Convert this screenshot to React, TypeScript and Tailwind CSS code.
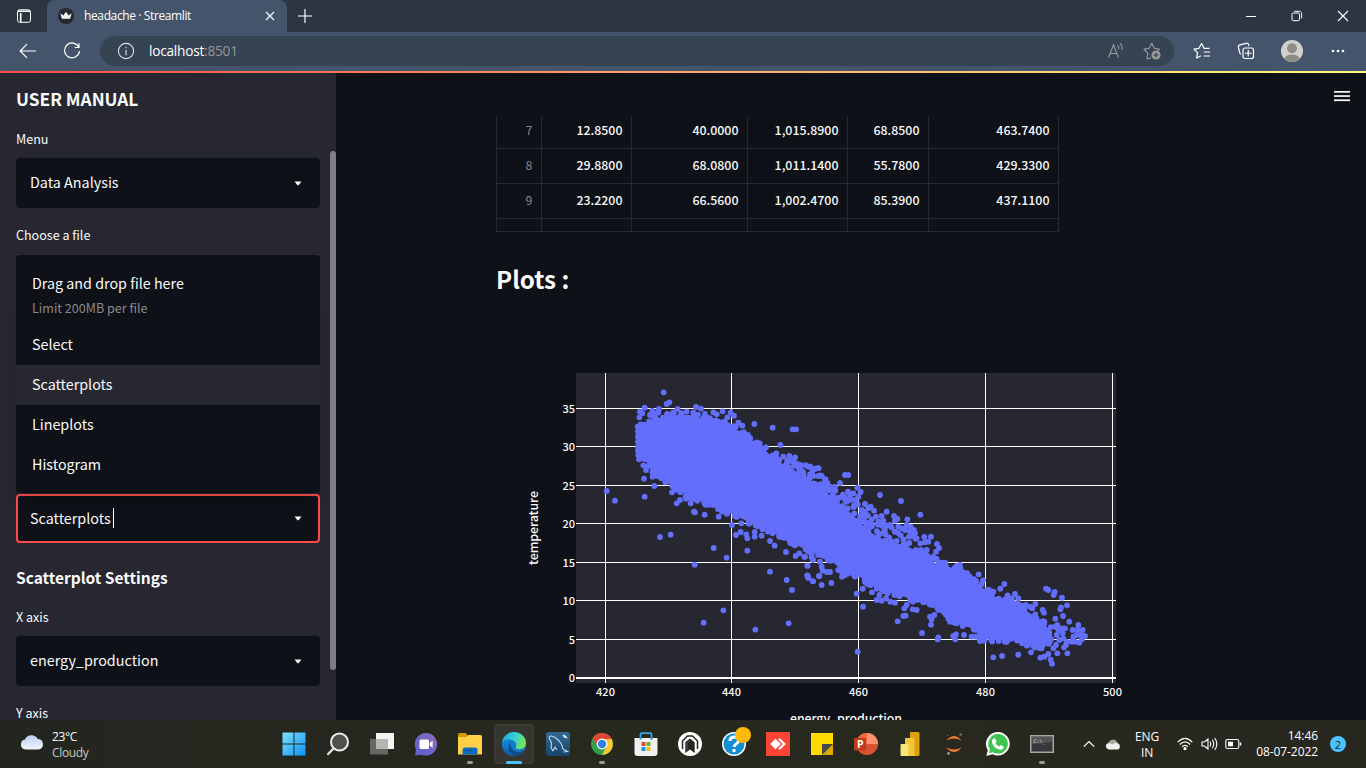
import React from "react";

type Pt = [number, number];

const SANS = "font-['Noto_Sans_CJK_SC','Noto_Sans',sans-serif]";
const UI = "font-['Open_Sans','Noto_Sans',sans-serif]";

/* ---------- scatter data ---------- */
const UPPER: Pt[] = [
  [639, 427], [644, 426], [650, 422], [660, 418], [677, 415], [690, 415], [697, 417], [710, 421], [723, 424], [733, 427], [740, 432], [750, 441],
  [767, 452], [777, 461], [793, 469], [803, 477], [820, 485], [833, 499], [845, 508], [857, 519], [865, 529], [877, 536],
  [890, 542], [905, 545], [920, 553], [937, 564], [957, 569], [973, 581], [987, 593], [1000, 599], [1017, 605], [1033, 615],
  [1043, 624], [1052, 631],
];
const LOWER: Pt[] = [
  [1052, 640], [1044, 648], [1036, 647], [1024, 643], [1013, 640], [993, 640], [980, 638], [971, 624], [950, 620],
  [943, 611], [930, 604], [913, 600], [897, 594], [877, 589], [860, 577], [843, 572], [835, 564], [821, 555],
  [800, 547], [787, 540], [773, 533], [757, 525], [740, 518], [723, 510], [707, 504], [690, 497], [677, 489],
  [660, 478], [649, 467], [642, 455], [639, 445],
];

const LEFT_POINTS: Pt[] = [
  [461, 97], [470, 132], [478, 127], [404, 143], [390, 155], [397, 160], [388, 172], [447, 147], [427, 152], [432, 160], [445, 158], [420, 165],
  [503, 147], [490, 157], [515, 160], [558, 141], [573, 146], [550, 158], [585, 162], [610, 157], [620, 163], [638, 154], [662, 158], [672, 167],
  [652, 172], [600, 175], [625, 185], [645, 187], [685, 188], [697, 197], [733, 192], [788, 203], [848, 208], [858, 208], [811, 255],
  [714, 225], [720, 235], [749, 250], [768, 262], [799, 280], [800, 295], [820, 290], [838, 288], [855, 292], [832, 302],
  [845, 303], [862, 312], [865, 322], [820, 322], [895, 320], [909, 328], [925, 348], [900, 343], [880, 338], [402, 356], [404, 410],
  [290, 393], [315, 422], [433, 378], [500, 430], [486, 397], [510, 420], [528, 416], [542, 430], [555, 457], [552, 455],
  [584, 464], [626, 470], [450, 531], [482, 524], [554, 614], [611, 564], [650, 593], [712, 572], [678, 525], [692, 516],
  [709, 523], [712, 535], [666, 495], [694, 490], [734, 516], [734, 530], [755, 527], [780, 543], [794, 557], [828, 576],
  [780, 635], [830, 660], [846, 690], [893, 617], [892, 646], [895, 653], [909, 664], [927, 648], [640, 751], [581, 788],
  [736, 809], [836, 790], [857, 588], [868, 580], [883, 590], [905, 592], [909, 600], [387, 298], [400, 316], [408, 330], [428, 350],
  [383, 200], [384, 215], [384, 230], [384, 245], [384, 260], [384, 273], [385, 285], [392, 193],
];
const RIGHT_POINTS: Pt[] = [
  [28, 320], [38, 328], [0, 323], [135, 345], [145, 345], [120, 369], [65, 348], [10, 342], [40, 348], [75, 360], [90, 380], [98, 388],
  [105, 413], [118, 413], [132, 410], [172, 383], [182, 396], [144, 395], [150, 405], [160, 400], [175, 410], [168, 420], [140, 425],
  [240, 405], [303, 423], [361, 464], [260, 455], [212, 440], [222, 452], [195, 432], [205, 445], [185, 450], [190, 462], [245, 468],
  [228, 470], [235, 485], [215, 478], [250, 482], [205, 490], [282, 468], [292, 477], [285, 482], [295, 500], [270, 495], [255, 500],
  [322, 478], [320, 495], [332, 500], [342, 510], [345, 520], [330, 515], [315, 510], [350, 535], [373, 531], [393, 530], [411, 552],
  [417, 564], [385, 545], [375, 547], [361, 550], [363, 570], [380, 570], [408, 575], [400, 590], [410, 597], [425, 608], [480, 615],
  [470, 618], [536, 643], [549, 661], [545, 672], [613, 672], [601, 686], [567, 690], [580, 695], [645, 702], [623, 706], [655, 715],
  [635, 715], [677, 735], [690, 740], [706, 732], [697, 745], [728, 750], [732, 758], [738, 686], [745, 690], [764, 696],
  [761, 705], [786, 713], [801, 736], [783, 742], [781, 748], [789, 768], [766, 776], [808, 785], [835, 795], [848, 810],
  [855, 828], [795, 805], [772, 795], [785, 805], [830, 825], [825, 845], [838, 848], [846, 838], [818, 810], [815, 845],
  [833, 810], [842, 825], [820, 830], [800, 845], [790, 835], [788, 820], [802, 880], [772, 880], [792, 862], [798, 855],
  [775, 810], [770, 825], [778, 840], [768, 855], [760, 865], [765, 800],
  [752, 899], [756, 911], [721, 893], [733, 890], [745, 882], [580, 892], [606, 888], [655, 884], [693, 877], [515, 830], [527, 830],
  [540, 843], [553, 842], [468, 823], [460, 828], [466, 838], [492, 825], [415, 832], [413, 838], [366, 819], [393, 794], [317, 767],
  [310, 768], [293, 784], [189, 740], [170, 701], [188, 686], [216, 697], [230, 720], [245, 722], [238, 705], [258, 715], [271, 725],
  [285, 728], [313, 745], [320, 735], [350, 750], [338, 748], [390, 770], [403, 765], [395, 778], [173, 875], [94, 669], [65, 675],
  [58, 648], [39, 664], [22, 648], [25, 653], [22, 617], [38, 597], [15, 590], [68, 632], [65, 620], [90, 636], [80, 636], [126, 650],
  [115, 630], [135, 645], [60, 605], [450, 785], [470, 790], [488, 798],
];

function mulberry(seed: number) {
  let a = seed;
  return () => {
    a = (a + 0x6d2b79f5) | 0;
    let t = Math.imul(a ^ (a >>> 15), 1 | a);
    t = (t + Math.imul(t ^ (t >>> 7), 61 | t)) ^ t;
    return ((t ^ (t >>> 14)) >>> 0) / 4294967296;
  };
}

function edgePoints(): Pt[] {
  const rnd = mulberry(11);
  const out: Pt[] = [];
  const walk = (line: Pt[], dir: number) => {
    for (let i = 0; i < line.length - 1; i++) {
      const [x1, y1] = line[i];
      const [x2, y2] = line[i + 1];
      const len = Math.hypot(x2 - x1, y2 - y1);
      const n = Math.max(1, Math.round(len / 3));
      const mid = (x1 + x2) / 2;
      const spread = dir < 0 && mid > 790 && mid < 915 ? 18 : dir < 0 ? 5 : 3.5;
      const count = spread > 10 ? n * 2 : n;
      for (let k = 0; k < count; k++) {
        const t = rnd();
        out.push([x1 + (x2 - x1) * t, y1 + (y2 - y1) * t + dir * (rnd() * spread - 1.5)]);
      }
    }
  };
  walk(UPPER, -1);
  walk(LOWER, 1);
  return out;
}

const POINTS: Pt[] = [
  ...LEFT_POINTS.map(([x, y]): Pt => [510 + x / 3, 360 + y / 3]),
  ...RIGHT_POINTS.map(([x, y]): Pt => [800 + x / 3, 360 + y / 3]),
  ...edgePoints(),
];

const X_TICKS: [number, string][] = [[605.5, "420"], [731.5, "440"], [858.5, "460"], [985.5, "480"], [1112.5, "500"]];
const Y_TICKS: [number, string][] = [
  [408.5, "35"], [446.5, "30"], [485.5, "25"], [523.5, "20"], [562.5, "15"], [600.5, "10"], [639.5, "5"], [678, "0"],
];

function ScatterChart() {
  return (
    <svg width="620" height="360" viewBox="510 360 620 360" className={`block shrink-0 ${SANS}`}>
      <rect x="576" y="373" width="540" height="310" fill="#262730" />
      {X_TICKS.map(([x]) => <line key={x} x1={x} x2={x} y1="373" y2="683" stroke="#fff" />)}
      {Y_TICKS.slice(0, 7).map(([y]) => <line key={y} x1="576" x2="1116" y1={y} y2={y} stroke="#fff" />)}
      <rect x="576" y="677" width="540" height="2" fill="#fff" />
      <g fill="#636efa">
        <polygon points={[...UPPER, ...LOWER].map((p) => p.join(",")).join(" ")} />
        {POINTS.map(([x, y], i) => <circle key={i} cx={x} cy={y} r="2.9" />)}
      </g>
      <g fill="#fafafa" fontSize="11" fontWeight="500">
        {Y_TICKS.map(([y, t]) => <text key={t} x="575" y={y + 4} textAnchor="end">{t}</text>)}
        {X_TICKS.map(([x, t]) => <text key={t} x={x} y="696" textAnchor="middle">{t}</text>)}
      </g>
      <g fill="#fafafa" fontSize="12.4" fontWeight="500" textAnchor="middle">
        <text transform="translate(538 528) rotate(-90)" textLength="74">temperature</text>
        <text x="846" y="723" textLength="112">energy_production</text>
      </g>
    </svg>
  );
}

/* ---------- browser chrome ---------- */
function TitleBar() {
  return (
    <div className={`flex h-8 shrink-0 items-stretch bg-[#2b3640] text-white ${UI}`}>
      <div className="flex w-[47px] items-center justify-center">
        <svg width="16" height="16" viewBox="0 0 16 16" fill="none" stroke="#fff" className="ml-px">
          <rect x="1.5" y="1.8" width="13" height="12.5" rx="2" />
          <path d="M2 3.3h12M4.7 5v9" strokeWidth="1.6" />
        </svg>
      </div>
      <div className="flex w-60 items-center rounded-t-lg bg-[#44546a] pl-[11px]">
        <svg width="16" height="16" viewBox="0 0 16 16">
          <circle cx="8" cy="8" r="8" fill="#262730" />
          <path d="M2.3 5.2l3 2.3L8 3.8l2.7 3.7 3-2.3-1.6 5.6H3.9z" fill="#f4f4f4" />
        </svg>
        <span className="ml-[10px] w-[178px] whitespace-nowrap text-[12px] tracking-[-0.38px]">headache · Streamlit</span>
        <svg width="10" height="10" viewBox="0 0 10 10" stroke="#fff" strokeWidth="1.1" className="ml-[3px]">
          <path d="M1 1l8 8M9 1L1 9" />
        </svg>
      </div>
      <svg width="16" height="16" viewBox="0 0 16 16" stroke="#fff" strokeWidth="1.2" className="ml-[10px] self-center">
        <path d="M8 1v14M1 8h14" />
      </svg>
      <div className="ml-auto flex items-center gap-[34px] pr-[17px]">
        <svg width="12" height="12" viewBox="0 0 12 12" stroke="#fff"><path d="M1 6.5h10" /></svg>
        <svg width="12" height="12" viewBox="0 0 12 12" fill="none" stroke="#fff">
          <rect x="1" y="3" width="7.5" height="7.7" rx="1.4" />
          <path d="M3.3 1.3h5.2c1.3 0 2.1.8 2.1 2.1v5" />
        </svg>
        <svg width="12" height="12" viewBox="0 0 12 12" stroke="#fff" strokeWidth="1.1"><path d="M1 1l10 10M11 1L1 11" /></svg>
      </div>
    </div>
  );
}

function Toolbar() {
  return (
    <div className={`flex h-[39px] shrink-0 items-center bg-[#44546a] pb-px ${UI}`}>
      <svg width="18" height="16" viewBox="0 0 18 16" fill="none" stroke="#fff" strokeWidth="1.2" className="ml-[19px]">
        <path d="M17 8H1.5M8 1.2L1.2 8 8 14.8" />
      </svg>
      <svg width="18" height="18" viewBox="0 0 18 18" fill="none" stroke="#fff" strokeWidth="1.2" className="ml-[26px]">
        <path d="M15.7 5.2A7.4 7.4 0 1 0 16.4 9M16 1.2v4.3h-4.3" />
      </svg>
      <div className="ml-[19px] flex h-[30px] w-[1074px] items-center rounded-full bg-[#364353] pl-[17px] pr-[13px]">
        <svg width="18" height="18" viewBox="0 0 18 18" fill="none" stroke="#dfe2e6">
          <circle cx="9" cy="9" r="7.6" strokeWidth="1.1" />
          <path d="M9 8v5.2M9 4.8v1.5" stroke="#b3b8c0" strokeWidth="1.5" />
        </svg>
        <span className="ml-[14px] whitespace-nowrap text-[13.7px] leading-5 tracking-[-0.25px] text-white">
          localhost<span className="text-[#96979a]">:8501</span>
        </span>
        <svg width="18" height="18" viewBox="0 0 18 18" fill="none" stroke="#9b9a98" strokeWidth="1.1" className="ml-auto">
          <path d="M1.5 15.5L6.5 3l5 12.5M3.2 11.5h6.6M10.5 3.2q1.6 1.5 1.2 4M13 1.2q2.8 2.6 2 6.8" />
        </svg>
        <svg width="18" height="18" viewBox="0 0 18 18" fill="none" className="ml-[18px]">
          <path d="M8 16l-4 1 .8-5.7L1 7.1l5.2-.8L8.8 1l2.4 5.3 5.2.8-2 2.2" stroke="#9b9a98" strokeWidth="1.1" strokeLinejoin="round" />
          <circle cx="13" cy="13" r="4.6" fill="#9b9a98" />
          <path d="M13 10.5v5M10.5 13h5" stroke="#364353" strokeWidth="1.2" />
        </svg>
      </div>
      <svg width="18" height="18" viewBox="0 0 18 18" fill="none" stroke="#fff" strokeWidth="1.2" strokeLinejoin="round" className="ml-[19px]">
        <path d="M8 13.7L3.7 16l.8-5.3L1 7.1l5-.8L8.6 1.5 11 6.3h5.5M10.7 10H17M10.7 14H17" />
      </svg>
      <svg width="18" height="18" viewBox="0 0 18 18" fill="none" stroke="#fff" strokeWidth="1.2" className="ml-[26px]">
        <path d="M4 12.2A2 2 0 0 1 2.8 10.7L1.4 5.5A2.2 2.2 0 0 1 2.9 2.9L9 1.3a2.2 2.2 0 0 1 2.7 1.6l.3 1.2" />
        <rect x="6" y="6" width="10.5" height="10.5" rx="2" />
        <path d="M11.25 8v6.5M8 11.25h6.5" />
      </svg>
      <svg width="22" height="22" viewBox="0 0 22 22" className="ml-[26px]">
        <defs><clipPath id="avatar"><circle cx="11" cy="11" r="11" /></clipPath></defs>
        <g clipPath="url(#avatar)">
          <rect width="22" height="22" fill="#d2d0ce" />
          <circle cx="11" cy="8.3" r="5" fill="#8f8b88" />
          <ellipse cx="11" cy="19.5" rx="8" ry="5" fill="#8f8b88" />
        </g>
      </svg>
      <svg width="14" height="4" viewBox="0 0 14 4" fill="#fff" className="ml-7">
        <circle cx="2" cy="2" r="1.3" /><circle cx="7" cy="2" r="1.3" /><circle cx="12" cy="2" r="1.3" />
      </svg>
    </div>
  );
}

/* ---------- sidebar ---------- */
function Caret() {
  return <svg width="8" height="5" viewBox="0 0 8 5" fill="#fafafa"><path d="M.5.5h7L4.5 4.2h-1z" /></svg>;
}

function SelectBox({ value, active }: { value: string; active?: boolean }) {
  return (
    <div className={`flex items-center justify-between rounded bg-[#0e1117] text-[14.35px] leading-5 text-[#fafafa] ${active ? "h-[49px] border-2 border-[#ff4b4b] pl-3 pr-4" : "h-[50px] pl-[14px] pr-[18px]"}`}>
      <span className="flex items-center whitespace-nowrap pb-[2px]">
        {value}
        {active && <span className="ml-[2px] h-5 w-px bg-white" />}
      </span>
      <Caret />
    </div>
  );
}

const OPTIONS = ["Select", "Scatterplots", "Lineplots", "Histogram"];

function Sidebar() {
  return (
    <aside className="relative flex w-[336px] shrink-0 flex-col overflow-hidden bg-[#262730] px-4 text-[#fafafa]">
      <h2 className="mt-[14px] h-6 shrink-0 whitespace-nowrap text-[17.3px] font-bold leading-6">USER MANUAL</h2>
      <label className="mt-[18px] h-5 shrink-0 text-[12.55px] leading-5">Menu</label>
      <div className="mt-[9px] shrink-0"><SelectBox value="Data Analysis" /></div>
      <label className="mt-[17px] h-5 shrink-0 text-[12.55px] leading-5">Choose a file</label>
      <div className="mt-[10px] h-[238px] shrink-0 rounded bg-[#0e1117] px-4 pt-[18px]">
        <div className="text-[14.3px] leading-5">Drag and drop file here</div>
        <div className="mt-[5px] text-[12.55px] leading-5 text-[#8b8c8f]">Limit 200MB per file</div>
      </div>
      <div className="mt-px shrink-0"><SelectBox value="Scatterplots" active /></div>
      <h3 className="mt-[22px] h-[25px] shrink-0 whitespace-nowrap text-[15.5px] font-bold leading-6">Scatterplot Settings</h3>
      <label className="mt-[17px] h-5 shrink-0 text-[12.55px] leading-5">X axis</label>
      <div className="mt-[9px] shrink-0"><SelectBox value="energy_production" /></div>
      <label className="mt-[17px] h-5 shrink-0 text-[12.55px] leading-5">Y axis</label>

      <ul className="absolute left-4 top-[244px] w-[304px] rounded bg-[#0e1117] py-2 text-[14.3px] leading-[38px] shadow-[0_4px_16px_rgba(0,0,0,0.2)]">
        {OPTIONS.map((o) => (
          <li key={o} className={`h-10 px-4 ${o === "Scatterplots" ? "bg-[#262730]" : ""}`}>{o}</li>
        ))}
      </ul>
      <div className="absolute right-0 top-[78px] h-[519px] w-[6px] rounded-full bg-[#7d7d83]" />
    </aside>
  );
}

/* ---------- main area ---------- */
const ROWS = [
  ["7", "12.8500", "40.0000", "1,015.8900", "68.8500", "463.7400"],
  ["8", "29.8800", "68.0800", "1,011.1400", "55.7800", "429.3300"],
  ["9", "23.2200", "66.5600", "1,002.4700", "85.3900", "437.1100"],
  ["", "", "", "", "", ""],
];
const ROW_HEIGHTS = ["h-8 pb-[5px]", "h-[35px] pb-[2px]", "h-[35px] pb-[2px]", "h-[13px]"];

function Main() {
  return (
    <main className="relative flex min-w-0 flex-1 flex-col overflow-hidden bg-[#0e1117]">
      <svg width="16" height="12" viewBox="0 0 16 12" className="absolute right-4 top-[17px]" fill="#fafafa">
        <rect y="1" width="16" height="1.7" /><rect y="5.2" width="16" height="1.7" /><rect y="9.4" width="16" height="1.7" />
      </svg>
      <div className="ml-40 mt-11 w-[563px] shrink-0 border-l border-[#27292e] text-[12.4px] text-[#fafafa]">
        {ROWS.map((row, r) => (
          <div key={r} className="grid grid-cols-[45px_90px_116px_100px_81px_130px]">
            {row.map((cell, c) => (
              <div key={c} className={`flex items-center justify-end border-b border-r border-[#27292e] pr-[8.5px] leading-none ${ROW_HEIGHTS[r]} ${c === 0 ? "text-[#85878b]" : "font-medium"}`}>
                {cell}
              </div>
            ))}
          </div>
        ))}
      </div>
      <h2 className="ml-40 mt-[31px] h-8 shrink-0 whitespace-nowrap text-[24.2px] font-bold leading-8 text-[#fafafa]">Plots :</h2>
      <div className="ml-[174px] mt-[65px] shrink-0"><ScatterChart /></div>
    </main>
  );
}

/* ---------- taskbar ---------- */
function Slot({ children, mark, active }: { children: React.ReactNode; mark?: boolean; active?: boolean }) {
  return (
    <div className="flex w-11 shrink-0 justify-center">
      <div className={`relative flex h-10 w-10 items-center justify-center rounded ${active ? "bg-[#35362f] ring-1 ring-inset ring-[#3d3e37]" : ""}`}>
        {children}
        {mark && <span className="absolute bottom-0 h-[3px] w-[6px] rounded-full bg-[#9b9b98]" />}
        {active && <span className="absolute bottom-0 h-[3px] w-4 rounded-full bg-[#4cc2ff]" />}
      </div>
    </div>
  );
}

function TaskIcons() {
  return (
    <div className="flex">
      <Slot>
        <svg width="24" height="24" viewBox="0 0 24 24">
          <defs><linearGradient id="win" x2="1" y2="1"><stop stopColor="#7ee0ff" /><stop offset="1" stopColor="#0a93f5" /></linearGradient></defs>
          <path d="M.5.5h11v11H.5zM12.5.5h11v11h-11zM.5 12.5h11v11H.5zM12.5 12.5h11v11h-11z" fill="url(#win)" />
        </svg>
      </Slot>
      <Slot>
        <svg width="24" height="24" viewBox="0 0 24 24" fill="none">
          <path d="M7.5 16.5L2.2 22" stroke="#dcdcdc" strokeWidth="2.5" strokeLinecap="round" />
          <circle cx="13.5" cy="10" r="8.5" fill="#50514b" stroke="#ececec" strokeWidth="2" />
        </svg>
      </Slot>
      <Slot>
        <svg width="24" height="24" viewBox="0 0 24 24">
          <rect x="6" y="1" width="18" height="16" fill="#f3f3f3" />
          <rect x="0" y="7" width="18" height="15.5" fill="#666664" />
          <rect x="6" y="7" width="12" height="10" fill="#b5b5b4" />
        </svg>
      </Slot>
      <Slot>
        <svg width="24" height="24" viewBox="0 0 24 24">
          <defs><linearGradient id="chat" x1="1" x2="0" y2="1"><stop stopColor="#8d6bb8" /><stop offset="1" stopColor="#5b5fd0" /></linearGradient></defs>
          <path d="M12 1a11.3 11.3 0 1 1-4.5 21.7L1 23.5l1-6A11.3 11.3 0 0 1 12 1z" fill="url(#chat)" />
          <rect x="5.5" y="7.5" width="9.5" height="9.5" rx="1.5" fill="#fff" />
          <path d="M15.7 11l3-2.5v7.5l-3-2.5z" fill="#fff" />
        </svg>
      </Slot>
      <Slot mark>
        <svg width="24" height="24" viewBox="0 0 24 24">
          <path d="M0 2.5q0-1.5 1.5-1.5h6L10 3.5V8H0z" fill="#d99a00" />
          <path d="M0 5h8.5l2-2H22.5q1.5 0 1.5 1.5V22.5H0z" fill="#ffcf48" />
          <path d="M4.5 22.5v-4.5q0-2.5 2.5-2.5h10q2.500 0 2.500 2.500v4.500z" fill="#0f6cbd" />
          <path d="M7.500 18.500h9" stroke="#05569e" />
        </svg>
      </Slot>
      <Slot active>
        <svg width="26" height="26" viewBox="0 0 26 26">
          <defs>
            <linearGradient id="edge1" x2="1" y2="0.300"><stop stopColor="#27a9dd" /><stop offset=".6" stopColor="#35cfcf" /><stop offset="1" stopColor="#71e45c" /></linearGradient>
            <linearGradient id="edge2" x2="0" y2="1"><stop stopColor="#1590dc" /><stop offset="1" stopColor="#0b58a8" /></linearGradient>
          </defs>
          <circle cx="13" cy="13" r="12" fill="#1478cc" />
          <path d="M1.200 11.500C2 5 7 1 13 1c7 0 12 5 12 11 0 4-3 6.200-6.500 6.200-3 0-4.500-1.300-3.600-2.800 1.500-3-1.500-6.400-6-6.400-4 0-6.700 1.400-7.700 2.500z" fill="url(#edge1)" />
          <path d="M1.200 11.500C2.500 8.500 6 7.700 9.500 8.300 6 10 4.800 15 7.500 19c2 3.200 5.500 5.300 8 5.700C8 26.300 0 20 1.200 11.500z" fill="url(#edge2)" />
          <path d="M9.500 12c-1 4 2 8.700 7.500 8.700 2.500 0 4.500-.7 6-1.500-2 3.500-5 5.500-8 5.700-5.500-.5-10-7.900-5.500-12.900z" fill="#134a84" />
        </svg>
      </Slot>
      <Slot>
        <svg width="24" height="24" viewBox="0 0 24 24">
          <defs><linearGradient id="sql" x2="0" y2="1"><stop stopColor="#316992" /><stop offset="1" stopColor="#17456b" /></linearGradient></defs>
          <rect width="24" height="24" rx="3" fill="url(#sql)" />
          <path d="M7 19L5 15.500 5.500 11 3 5.500Q4 3 7 4.500q6 2.500 9 9l1 3.500 4.500 2.500-4 .5M7 19l2-4 2 3" fill="none" stroke="#c2d8e6" strokeWidth="1.100" />
          <path d="M16.500 2.500l1.200 3 4 1-2-3z" fill="#dbe8f0" />
        </svg>
      </Slot>
      <Slot mark>
        <svg width="24" height="24" viewBox="0 0 24 24">
          <circle cx="12" cy="12" r="11" fill="#2fa04e" />
          <path d="M12 7h9.700A11 11 0 0 1 12 23l4.500-8.500z" fill="#fdc82f" />
          <path d="M2.500 6.500L7.700 14.500 12 7h9.700A11 11 0 0 0 2.500 6.500z" fill="#e24536" />
          <circle cx="12" cy="12" r="5.400" fill="#fff" /><circle cx="12" cy="12" r="4.200" fill="#317fe8" />
        </svg>
      </Slot>
      <Slot>
        <svg width="24" height="24" viewBox="0 0 24 24">
          <path d="M6.500 7V2.500Q6.500 1.200 8 1.200h8q1.500 0 1.500 1.300V7" fill="none" stroke="#31aaf0" strokeWidth="1.800" />
          <path d="M.5 6h23v15q0 3-3 3h-17q-3 0-3-3z" fill="#f1f1f1" />
          <path d="M6.500 6v1.500M17.500 6v1.500" stroke="#1b7fc4" strokeWidth="1.800" />
          <path fill="#e34b32" d="M7.500 10h4v4h-4z" /><path fill="#6fae25" d="M12.500 10h4v4h-4z" />
          <path fill="#1599dc" d="M7.500 15h4v4h-4z" /><path fill="#f8b719" d="M12.500 15h4v4h-4z" />
        </svg>
      </Slot>
      <Slot>
        <svg width="24" height="24" viewBox="0 0 24 24">
          <circle cx="12" cy="12" r="12" fill="#fff" />
          <path d="M4.500 17V9L9.500 4h5l5 5v8" fill="none" stroke="#25261f" strokeWidth="1.500" />
          <path d="M7.300 21V10.300L12 6.500l4.700 3.800V21L12 17.500z" fill="#25261f" />
          <path d="M9 18.200v-7L12 8.900" fill="none" stroke="#77776f" strokeWidth=".6" />
        </svg>
      </Slot>
      <Slot>
        <svg width="30" height="30" viewBox="0 0 30 30" className="-mt-1 ml-1 shrink-0">
          <circle cx="13" cy="17" r="12" fill="#fff" /><circle cx="13" cy="17" r="10.500" fill="#118fd2" />
          <path d="M9 14q0-4 4.200-4t4.200 3.700q0 2-2.200 3.300-2 1.200-2 3" fill="none" stroke="#fff" strokeWidth="3" />
          <circle cx="13" cy="23.500" r="1.800" fill="#fff" />
          <circle cx="22" cy="8" r="8" fill="#ffb90a" />
        </svg>
      </Slot>
      <Slot>
        <svg width="24" height="24" viewBox="0 0 24 24">
          <rect width="24" height="24" fill="#fb4436" />
          <path d="M4.200 12L9.500 6.700l5.300 5.300-5.300 5.300z" fill="#fff" />
          <path d="M13 6.700l5.300 5.300-5.300 5.300" fill="none" stroke="#fff" strokeWidth="2.200" />
        </svg>
      </Slot>
      <Slot>
        <svg width="24" height="24" viewBox="0 0 24 24">
          <path d="M1 1h22v11.500L12 23H1z" fill="#ffda00" /><path d="M12 23V12h11v11z" fill="#dfa900" /><path d="M12 12h11L12 23z" fill="#46474a" />
        </svg>
      </Slot>
      <Slot>
        <svg width="26" height="24" viewBox="0 0 26 24">
          <circle cx="14" cy="12" r="11" fill="#d75333" /><path d="M14 1a11 11 0 0 1 11 11H14z" fill="#ff9171" />
          <path d="M14 1v11H3A11 11 0 0 1 14 1z" fill="#ed6c47" />
          <rect x="1" y="6" width="12" height="12.500" rx="1" fill="#c13b1b" />
          <text x="4" y="16" fontSize="10.500" fontWeight="700" fill="#fff" className={UI}>P</text>
        </svg>
      </Slot>
      <Slot>
        <svg width="24" height="24" viewBox="0 0 24 24">
          <path d="M13 0h7q1.500 0 1.500 1.500v21Q21.500 24 20 24h-8V1q0-1 1-1z" fill="#dca010" />
          <path d="M7.500 6H15q1.500 0 1.500 1.500V24H7V7q0-1 .5-1z" fill="#f1c735" />
          <path d="M3.500 12H9q1.500 0 1.500 1.500V24H3.500Q2.500 24 2.500 23V13q0-1 1-1z" fill="#fae477" />
        </svg>
      </Slot>
      <Slot>
        <svg width="24" height="24" viewBox="0 0 24 24">
          <path d="M4.300 8.500Q12-.5 19.700 8.500 12 4.500 4.300 8.500zM4.300 15.500Q12 24.500 19.700 15.500 12 19.500 4.300 15.500z" fill="#f37726" />
          <circle cx="18.500" cy="2.500" r="1.200" fill="#777874" /><circle cx="6.500" cy="21.500" r="1.400" fill="#9a9b9c" /><circle cx="5.500" cy="3.500" r=".7" fill="#777" />
        </svg>
      </Slot>
      <Slot>
        <svg width="24" height="24" viewBox="0 0 24 24">
          <path d="M12 0a11.800 11.800 0 1 1-5.500 22.300L.3 24l1.500-6A11.800 11.800 0 0 1 12 0z" fill="#fff" />
          <path d="M12 2a9.800 9.800 0 1 1-5 18.200L3 21.300l1-4A9.800 9.800 0 0 1 12 2z" fill="#3fc351" />
          <path d="M7.500 6.500l1.500-.2 1.500 3.200-1 1.400q1.200 2.500 3.700 3.500l1.300-1.400 3.200 1.500q0 2.800-3 3.300c-4 0-8.700-4-8.700-8.300 0-1.300.6-2.300 1.500-3z" fill="#fff" />
        </svg>
      </Slot>
      <Slot mark>
        <svg width="24" height="24" viewBox="0 0 24 24">
          <rect x=".75" y="3.750" width="22.500" height="16.500" fill="#36373a" stroke="#a5a7a9" strokeWidth="1.500" />
          <path d="M2 5h20v5L2 12z" fill="#55565a" />
          <text x="3.500" y="11" fontSize="5" fill="#d0d0d0" className="font-['DejaVu_Sans_Mono',monospace]">C:\_</text>
        </svg>
      </Slot>
    </div>
  );
}

function Taskbar() {
  return (
    <div className={`flex h-12 shrink-0 items-center bg-[linear-gradient(90deg,#23261f,#28291e_50%,#27271f)] text-[12px] text-white ${UI}`}>
      <svg width="24" height="16" viewBox="0 0 24 16" className="mb-1 ml-5">
        <defs><linearGradient id="cloud" x2="0" y2="1"><stop stopColor="#b8d0f3" /><stop offset="1" stopColor="#f2f5fb" /></linearGradient></defs>
        <path d="M5.500 15.500A5 5 0 0 1 5 5.600 7 7 0 0 1 17.700 5a5.300 5.300 0 0 1 1 10.500z" fill="url(#cloud)" />
      </svg>
      <div className="ml-[8px] w-[220px] pt-px leading-4 tracking-[-0.35px]">
        <div>23°C</div>
        <div className="text-[#c8c8c6]">Cloudy</div>
      </div>
      <TaskIcons />
      <svg width="12" height="8" viewBox="0 0 12 8" fill="none" stroke="#fff" strokeWidth="1.200" className="ml-[19px]"><path d="M.8 6.700L6 1.500l5.200 5.200" /></svg>
      <svg width="16" height="12" viewBox="0 0 16 12" className="ml-[10px]">
        <path d="M3 6a5 5 0 0 1 9.500-1.500L14 8H3z" fill="#a5a5a2" />
        <path d="M3.500 11.500a3.200 3.200 0 0 1 0-6.300q2-.2 4 1.300 2-2 5-1.200a3.200 3.200 0 0 1 0 6.200z" fill="#f2f2f2" />
      </svg>
      <div className="ml-[13px] w-[26px] pt-px text-center leading-4 tracking-[-0.2px]">
        <div>ENG</div>
        <div>IN</div>
      </div>
      <svg width="16" height="14" viewBox="0 0 16 14" fill="none" stroke="#fff" strokeWidth="1.200" className="ml-[17px]">
        <path d="M.7 5.200Q8-2.500 15.300 5.200M2.900 7.500q5.100-5.200 10.200 0M5.100 9.700q2.900-2.800 5.800 0" />
        <circle cx="8" cy="11.700" r="1.600" fill="#fff" stroke="none" />
      </svg>
      <svg width="17" height="14" viewBox="0 0 17 14" fill="none" stroke="#fff" strokeWidth="1.100" className="ml-[8px]">
        <path d="M1 5v4h2.500L7 12V2L3.500 5zM9 4.500q1.600 2.500 0 5M11.300 2.700q3 4.300 0 8.600M13.700 1q4.300 6 0 12" />
      </svg>
      <svg width="17" height="12" viewBox="0 0 17 12" fill="none" stroke="#fff" strokeWidth="1.100" className="ml-[7px]">
        <rect x=".8" y="1.500" width="13" height="9" rx="1.800" /><rect x="3" y="3.700" width="5" height="4.600" fill="#fff" stroke="none" />
        <path d="M15.500 4.500v3" strokeWidth="1.500" />
      </svg>
      <div className="ml-auto whitespace-nowrap text-right leading-4 tracking-[-0.08px]">
        <div>14:46</div>
        <div>08-07-2022</div>
      </div>
      <div className="ml-3 mr-5 flex h-4 w-4 items-center justify-center rounded-full bg-[#4cc2ff] text-[11px] leading-none text-[#10212b]">2</div>
    </div>
  );
}

export default function App() {
  return (
    <div className="flex h-[768px] w-[1366px] flex-col overflow-hidden bg-[#0e1117]">
      <TitleBar />
      <Toolbar />
      <div className="h-[2px] shrink-0 bg-[linear-gradient(90deg,#ff4b4b,#fffd80)]" />
      <div className={`flex min-h-0 flex-1 ${SANS}`}>
        <Sidebar />
        <Main />
      </div>
      <Taskbar />
    </div>
  );
}
